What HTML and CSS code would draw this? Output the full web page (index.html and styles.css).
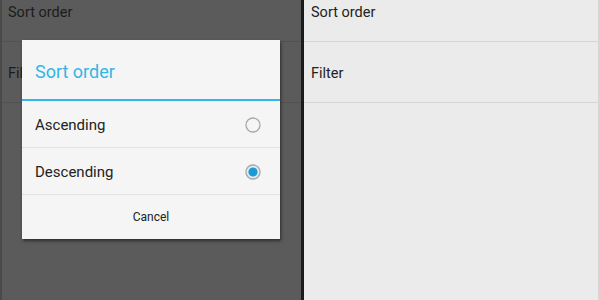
FILE: index.html
```html
<!DOCTYPE html>
<html>
<head>
<meta charset="utf-8">
<link rel="stylesheet" href="styles.css">
</head>
<body>
<div class="screen">
  <div class="panel panel-dim">
    <div class="list">
      <div class="item">Sort order</div>
      <div class="item">Filter</div>
    </div>
    <div class="dialog">
      <div class="dialog-title">Sort order</div>
      <div class="option">
        <span>Ascending</span>
        <svg class="radio" width="18" height="18" viewBox="0 0 18 18"><circle cx="9" cy="9" r="7" fill="none" stroke="#a9a9a9" stroke-width="1.3"/></svg>
      </div>
      <div class="option">
        <span>Descending</span>
        <svg class="radio" width="18" height="18" viewBox="0 0 18 18"><circle cx="9" cy="9" r="8" fill="#e2eef3"/><circle cx="9" cy="9" r="7" fill="none" stroke="#a9a9a9" stroke-width="1.3"/><circle cx="9" cy="9" r="4.6" fill="#1a9ad6"/></svg>
      </div>
      <div class="cancel">Cancel</div>
    </div>
  </div>
  <div class="divider"></div>
  <div class="panel panel-light">
    <div class="list">
      <div class="item">Sort order</div>
      <div class="item">Filter</div>
    </div>
  </div>
</div>
</body>
</html>
```
FILE: styles.css
```css
html, body {
  margin: 0;
  padding: 0;
}
body {
  width: 600px;
  height: 300px;
  overflow: hidden;
  font-family: Roboto, "Noto Sans", sans-serif;
}
.screen {
  display: flex;
  width: 600px;
  height: 300px;
}
.panel {
  position: relative;
  overflow: hidden;
  height: 300px;
}
.panel-dim {
  width: 299px;
  background: #5b5b5b;
  border-left: 2px solid #4a4a4a;
  color: #1c1c1c;
}
.divider {
  width: 3px;
  background: #1b1b1b;
}
.panel-light {
  flex: 1;
  background: #ebebeb;
  color: #222;
  border-right: 2px solid #d6d6d6;
}
.list {
  margin-top: -19px;
}
.item {
  height: 57px;
  padding-top: 3px;
  display: flex;
  align-items: center;
  padding-left: 7px;
  font-size: 14.5px;
  border-bottom: 1px solid #d6d6d6;
}
.panel-dim .item {
  padding-left: 6px;
  border-bottom-color: #525252;
}
.dialog {
  position: absolute;
  left: 20px;
  top: 40px;
  width: 258px;
  background: #f5f5f5;
  box-shadow: 1px 2px 3px rgba(0, 0, 0, 0.5);
  color: #222;
}
.dialog-title {
  height: 55px;
  padding-top: 4px;
  display: flex;
  align-items: center;
  padding-left: 13px;
  font-size: 18px;
  color: #33b5e5;
  border-bottom: 2px solid #33b5e5;
}
.option {
  height: 44px;
  padding-top: 2px;
  display: flex;
  align-items: center;
  justify-content: space-between;
  padding-left: 13px;
  padding-right: 18px;
  font-size: 15px;
  border-bottom: 1px solid #e2e2e2;
}
.radio {
  display: block;
}
.cancel {
  height: 44px;
  display: flex;
  align-items: center;
  justify-content: center;
  font-size: 12px;
  color: #222;
}
```
